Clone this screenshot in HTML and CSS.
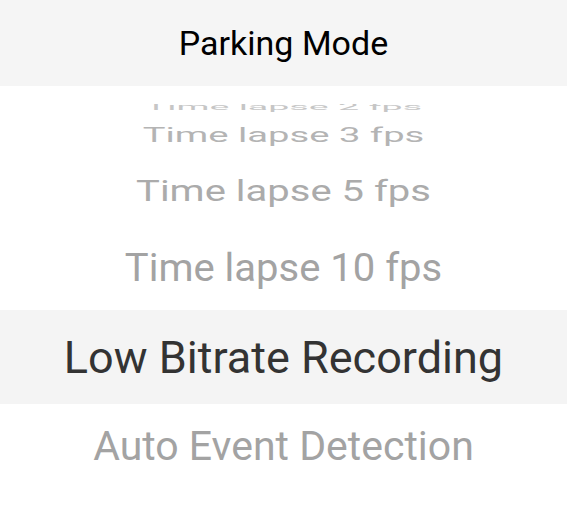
FILE: index.html
```html
<!DOCTYPE html>
<html lang="en">
<head>
    <meta charset="UTF-8">
    <meta name="viewport" content="width=device-width, initial-scale=1">
    <title>Parking Mode</title>
    <link rel="stylesheet" href="styles.css">
</head>
<body>
<!-- Başlık -->
<div class="header">Parking Mode</div>

<!-- Seçim tekerleği -->
<div class="picker">
    <div class="wheel-row above-4"><span>Time lapse 2 fps</span></div>
    <div class="wheel-row above-3"><span>Time lapse 3 fps</span></div>
    <div class="wheel-row above-2"><span>Time lapse 5 fps</span></div>
    <div class="wheel-row above-1"><span>Time lapse 10 fps</span></div>
    <div class="wheel-row selected"><span>Low Bitrate Recording</span></div>
    <div class="wheel-row below-1"><span>Auto Event Detection</span></div>
</div>
</body>
</html>
```

FILE: styles.css
```css
/* Genel stil ayarları */
* { box-sizing: border-box; margin: 0; padding: 0; }
body {
    font-family: Roboto, "Liberation Sans", Arial, sans-serif;
    background: #fff;
    width: 567px;
    height: 528px;
    overflow: hidden;
}

/* Başlık */
.header {
    height: 86px;
    background: #f5f5f5;
    display: flex;
    align-items: center;
    justify-content: center;
    font-size: 34px;
    color: #000;
}

/* Tekerlek */
.picker {
    margin-top: 18px;
    height: 424px;
    overflow: hidden;
    display: flex;
    flex-direction: column;
}
.wheel-row {
    flex-shrink: 0;
    display: flex;
    align-items: center;
    justify-content: center;
    font-size: 40px;
    line-height: 1;
    color: #a3a3a3;
}
.wheel-row span {
    display: block;
    white-space: nowrap;
}
.above-4 { height: 20px; margin-top: -7px; color: #c6c6c6; }
.above-4 span { transform: scale(0.94, 0.22); }
.above-3 { height: 38px; color: #b4b4b4; }
.above-3 span { transform: scale(0.955, 0.49); }
.above-2 { height: 72px; color: #ababab; }
.above-2 span { transform: scaleY(0.74); }
.above-1 { height: 83px; }
.above-1 span { transform: scaleY(0.95); }
.selected {
    height: 94px;
    background: #f4f4f4;
    font-size: 45px;
    color: #333;
}
.below-1 { height: 84px; font-size: 41px; }
```
